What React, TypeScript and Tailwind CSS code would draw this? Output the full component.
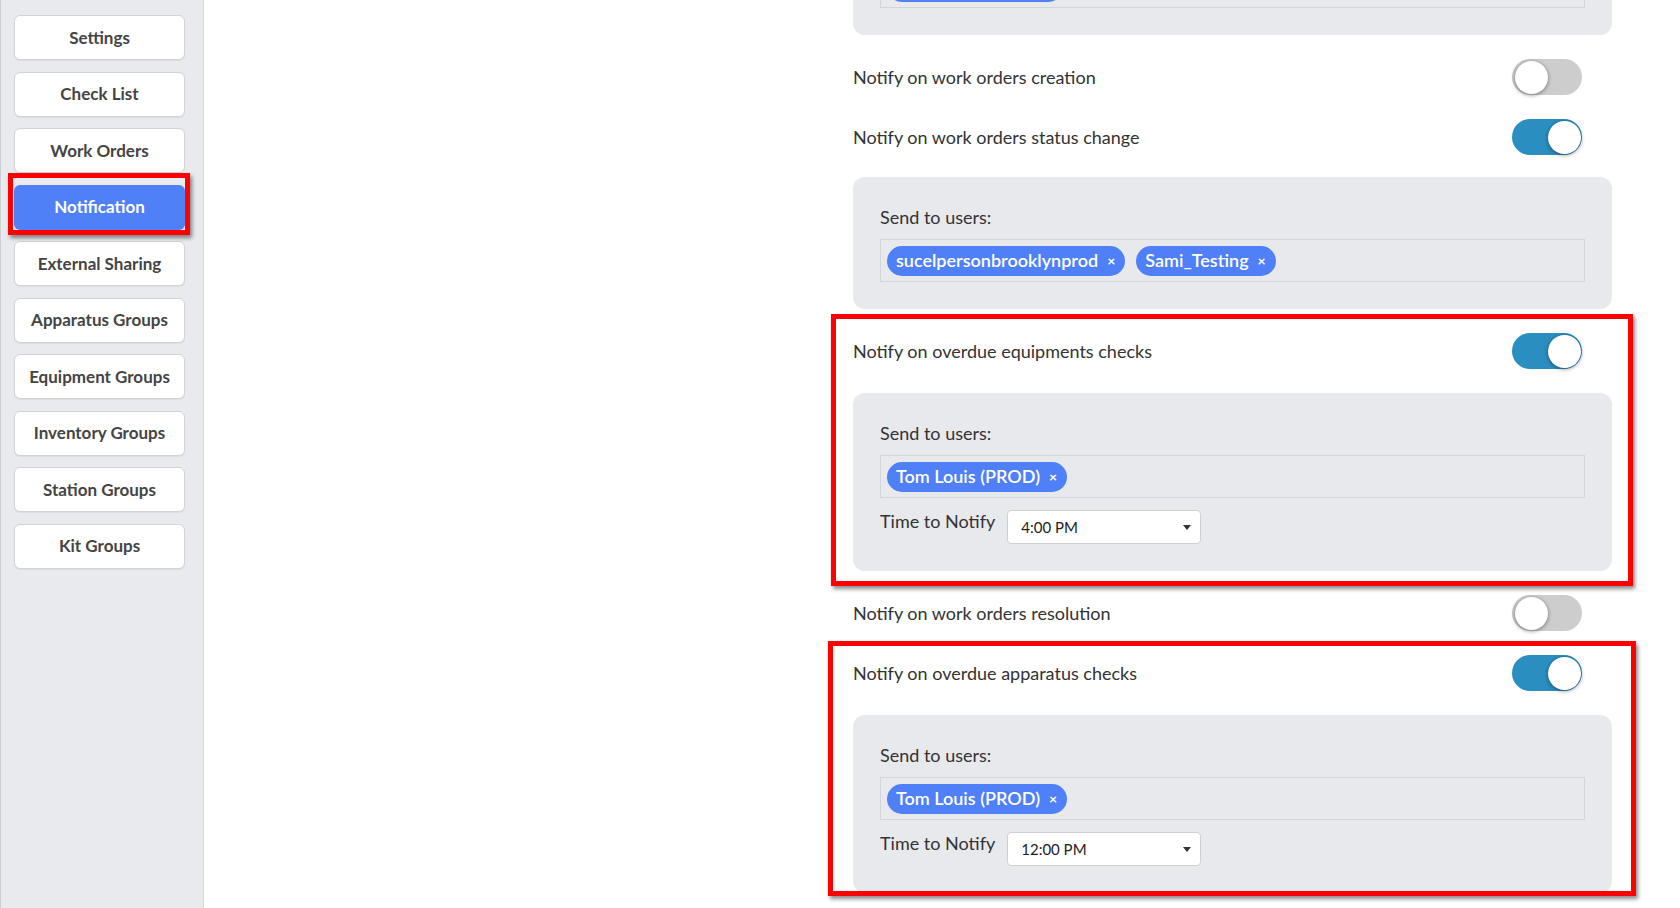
import React from 'react';

const menu = [
  'Settings',
  'Check List',
  'Work Orders',
  'Notification',
  'External Sharing',
  'Apparatus Groups',
  'Equipment Groups',
  'Inventory Groups',
  'Station Groups',
  'Kit Groups',
];

const Toggle = ({ on }: { on: boolean }) => (
  <div className={`relative h-[36px] w-[70px] rounded-full ${on ? 'bg-[#2b8ec1]' : 'bg-[#cdcdcd]'}`}>
    <div
      className={`absolute top-[1.5px] h-[33px] w-[33px] rounded-full bg-white shadow-[0_1px_4px_rgba(0,0,0,0.45)] ${
        on ? 'right-[1px]' : 'left-[3px]'
      }`}
    />
  </div>
);

const Tag = ({ label }: { label: string }) => (
  <span className="flex h-[30px] items-center gap-[9px] rounded-full bg-[#4f80f7] pl-[9px] pr-[10px] text-[18px] font-semibold text-white">
    {label}
    <span className="text-[14px] font-bold leading-none">×</span>
  </span>
);

const Row = ({ label, on }: { label: string; on: boolean }) => (
  <div className="flex h-[60px] items-center justify-between pr-[30px]">
    <span className="text-[18px] text-[#333]">{label}</span>
    <Toggle on={on} />
  </div>
);

const UsersBox = ({ users, time, className = '' }: { users: string[]; time?: string; className?: string }) => (
  <div className={`rounded-[12px] bg-[#e8e9ed] px-[27px] pb-[27px] pt-[27px] ${className}`}>
    <div className="text-[18px] leading-[26px] text-[#333]">Send to users:</div>
    <div className="mt-[9px] flex h-[43px] items-center gap-[11px] border border-[#d4d5d9] px-[6px]">
      {users.map((u) => (
        <Tag key={u} label={u} />
      ))}
    </div>
    {time && (
      <div className="mt-[12px] flex items-start gap-[12px]">
        <span className="text-[18px] leading-[22px] text-[#333]">Time to Notify</span>
        <div className="flex h-[34px] w-[194px] items-center justify-between rounded-[4px] border border-[#d0d0d0] bg-white pl-[13px] pr-[9px] text-[15px] text-[#222]">
          {time}
          <svg width="8" height="5" viewBox="0 0 8 5">
            <path d="M0 0h8L4 5z" fill="#333" />
          </svg>
        </div>
      </div>
    )}
  </div>
);

// box scrolled off the top: only its lower edge shows
const ClippedBox = () => (
  <div className="-mt-[97px] mb-[12px] rounded-[12px] bg-[#e8e9ed] px-[27px] pb-[27px] pt-[27px]">
    <div className="h-[26px]" />
    <div className="mt-[9px] flex h-[43px] items-center border border-[#d4d5d9] px-[6px]">
      <span className="h-[30px] w-[176px] rounded-full bg-[#4f80f7]" />
    </div>
  </div>
);

export default function App() {
  return (
    <div className="flex h-[908px] w-full overflow-hidden bg-white font-['Lato',sans-serif]">
      {/* Sidebar */}
      <aside className="flex h-full w-[204px] shrink-0 flex-col items-start gap-[11.5px] border-l border-r border-l-[#cfd0d4] border-r-[#d5d6da] bg-[#e9eaee] pl-[13px] pt-[15px]">
        {menu.map((m) =>
          m === 'Notification' ? (
            <div key={m} className="relative w-[171px]">
              <div className="flex h-[45px] w-[171px] items-center justify-center rounded-[6px] bg-[#4f80f7] text-[17px] font-bold text-white">
                {m}
              </div>
              <div className="pointer-events-none absolute -bottom-[5px] -left-[6px] -right-[5px] -top-[12px] border-[5px] border-[#ff0000] shadow-[2px_3px_4px_rgba(0,0,0,0.45)]" />
            </div>
          ) : (
            <div
              key={m}
              className="flex h-[45px] w-[171px] items-center justify-center rounded-[6px] border border-[#d3d3d6] bg-white text-[17px] font-bold text-[#444] shadow-[0_1px_1px_rgba(0,0,0,0.06)]"
            >
              {m}
            </div>
          )
        )}
      </aside>

      {/* Content */}
      <main className="flex-1 pl-[649px]">
        <div className="flex w-[759px] flex-col">
          <ClippedBox />
          <Row label="Notify on work orders creation" on={false} />
          <Row label="Notify on work orders status change" on={true} />
          <UsersBox users={['sucelpersonbrooklynprod', 'Sami_Testing']} className="mt-[10px] mb-[12px]" />

          <div className="relative">
            <Row label="Notify on overdue equipments checks" on={true} />
            <UsersBox users={['Tom Louis (PROD)']} time="4:00 PM" className="mt-[12px]" />
            <div className="pointer-events-none absolute -bottom-[15px] -left-[22px] -right-[21px] -top-[7px] border-[5px] border-[#ff0000] shadow-[2px_3px_4px_rgba(0,0,0,0.45)]" />
          </div>

          <div className="mt-[12px]">
            <Row label="Notify on work orders resolution" on={false} />
          </div>

          <div className="relative">
            <Row label="Notify on overdue apparatus checks" on={true} />
            <UsersBox users={['Tom Louis (PROD)']} time="12:00 PM" className="mt-[12px]" />
            <div className="pointer-events-none absolute -bottom-[3px] -left-[25px] -right-[24px] -top-[2px] border-[5px] border-[#ff0000] shadow-[2px_3px_4px_rgba(0,0,0,0.45)]" />
          </div>
        </div>
      </main>
    </div>
  );
}
